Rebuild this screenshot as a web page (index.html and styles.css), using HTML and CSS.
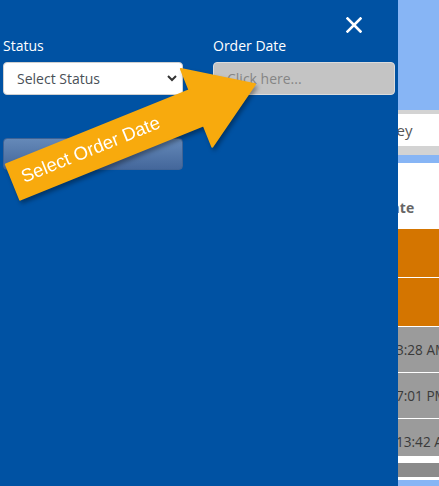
FILE: index.html
```html
<!DOCTYPE html>
<html lang="en">
<head>
<meta charset="utf-8">
<title>Orders</title>
<link rel="stylesheet" href="styles.css">
</head>
<body>
<div class="page">
  <div class="topbar"></div>
  <div class="searchbar"><div class="search-input">Search Key</div></div>
  <div class="band"></div>
  <div class="thead"><span>Date</span></div>
  <div class="tbody">
    <div class="row hl"></div>
    <div class="row hl"></div>
    <div class="row gr">3:28 AM</div>
    <div class="row gr">7:01 PM</div>
    <div class="row gr">13:42 AM</div>
  </div>
  <div class="gap"></div>
  <div class="scrollbar"></div>
  <div class="gap2"></div>
  <div class="bottom"></div>
</div>

<aside class="drawer">
  <div class="drawer-head">
    <svg class="close" width="16" height="16" viewBox="0 0 16 16"><path d="M1.5 1.5 L14.5 14.5 M14.5 1.5 L1.5 14.5" stroke="#fff" stroke-width="2.6" stroke-linecap="square"/></svg>
  </div>
  <div class="form">
    <div class="field">
      <label class="label">Status</label>
      <div class="select-wrap">
        <select class="select"><option>Select Status</option></select>
        <svg class="chev" width="10" height="7" viewBox="0 0 10 7"><path d="M1 1 L5 5 L9 1" fill="none" stroke="#333" stroke-width="2"/></svg>
      </div>
    </div>
    <div class="field">
      <label class="label">Order Date</label>
      <input class="date" type="text" placeholder="Click here...">
    </div>
    <button class="btn" type="button"></button>
  </div>
</aside>

<svg class="callout" width="439" height="486" viewBox="0 0 439 486">
  <g transform="translate(13 182) rotate(-22)">
    <polygon points="0,-19 198,-19 198,-42 261,0 198,42 198,19 0,19" fill="#f8aa0d" stroke="#f8aa0d" stroke-width="2" stroke-linejoin="round"/>
    <text x="10" y="5" class="callout-text">Select Order Date</text>
  </g>
</svg>
</body>
</html>
```

FILE: styles.css
```css
* { box-sizing: border-box; }
html, body { margin: 0; padding: 0; }
body {
  width: 439px;
  height: 486px;
  overflow: hidden;
  position: relative;
  background: #fff;
  font-family: "Open Sans", "DejaVu Sans", sans-serif;
}

/* background page */
.page { display: flex; flex-direction: column; height: 486px; }
.topbar { height: 110px; background: #87b5f5; flex: none; }
.searchbar { background: #d3d3d3; padding: 4px 0 9px; flex: none; }
.search-input {
  height: 32px;
  background: #fff;
  font-size: 15px;
  color: #555;
  line-height: 32px;
  padding-left: 336px;
  white-space: nowrap;
  overflow: hidden;
}
.band { height: 8px; background: #87b5f5; flex: none; }
.thead {
  height: 66px;
  flex: none;
  display: flex;
  align-items: flex-end;
  padding: 0 0 12px 381px;
  font-weight: 700;
  font-size: 14px;
  line-height: 19px;
  color: #666;
  white-space: nowrap;
}
.tbody { height: 227px; overflow: hidden; flex: none; }
.row {
  display: flex;
  align-items: center;
  border-bottom: 1px solid #fff;
  padding-left: 396px;
  font-size: 13.6px;
  color: #3a3a3a;
  white-space: nowrap;
}
.row.hl { height: 49px; background: #d47500; }
.row.gr { height: 46px; background: #9b9b9b; }
.gap { height: 7px; flex: none; }
.scrollbar { height: 14px; background: #8b8b8b; flex: none; }
.gap2 { height: 3px; flex: none; }
.bottom { flex: 1; background: #87b5f5; }

/* drawer overlay */
.drawer {
  position: absolute;
  top: 0;
  left: 0;
  width: 398px;
  height: 486px;
  background: #0052a3;
}
.drawer-head {
  display: flex;
  justify-content: flex-end;
  padding: 17px 36px 0 0;
  height: 36px;
}
.close { display: block; }
.form {
  display: grid;
  grid-template-columns: 180px 182px;
  column-gap: 30px;
  padding-left: 3px;
}
.field { display: flex; flex-direction: column; }
.label {
  font-size: 14px;
  line-height: 19px;
  color: #fff;
  margin-bottom: 7px;
}
.select-wrap { position: relative; }
.select {
  appearance: none;
  -webkit-appearance: none;
  width: 100%;
  height: 33px;
  border: 1px solid #d0d0d0;
  border-radius: 4px;
  background: #fff;
  font-family: "Open Sans", sans-serif;
  font-size: 14px;
  color: #495057;
  padding: 0 0 0 13px;
  margin: 0;
}
.chev { position: absolute; right: 6px; top: 13px; }
.date {
  width: 100%;
  height: 33px;
  border: 1px solid #dcdcdc;
  border-radius: 4px;
  background: #c4c4c4;
  font-family: "Open Sans", sans-serif;
  font-size: 14px;
  padding: 0 0 0 13px;
  margin: 0;
  color: #555;
}
.date::placeholder { color: #858585; }
.btn {
  grid-column: 1;
  margin-top: 43px;
  height: 32px;
  border: 1px solid #3f6395;
  border-radius: 4px;
  background: linear-gradient(#6589b8, #44679b);
  padding: 0;
}

/* callout arrow */
.callout {
  position: absolute;
  top: 0;
  left: 0;
  pointer-events: none;
  filter: drop-shadow(2px 3px 2px rgba(0, 0, 0, 0.35));
}
.callout-text {
  font-family: "Liberation Sans", Arial, sans-serif;
  font-size: 18.5px;
  fill: #fff;
}
```
